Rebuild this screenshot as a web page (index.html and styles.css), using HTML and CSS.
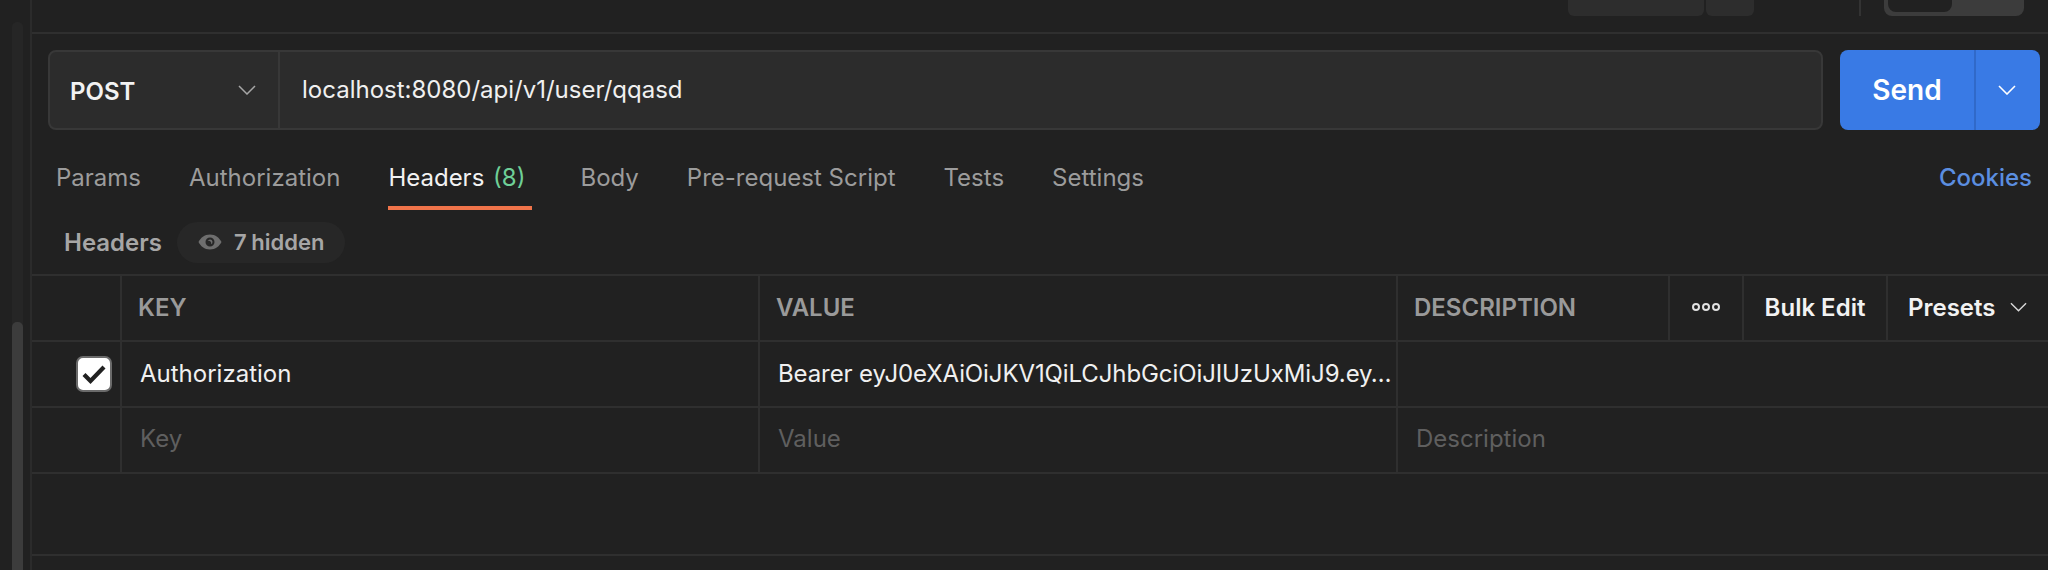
FILE: index.html
```html
<!DOCTYPE html>
<html lang="en">
<head>
<meta charset="utf-8">
<title>Request</title>
<link rel="stylesheet" href="styles.css">
</head>
<body>
<div class="app">
  <aside class="rail"><div class="track"><div class="thumb"></div></div></aside>
  <main class="main">
    <div class="topbar">
      <div class="seg seg-a"></div>
      <div class="seg seg-b"></div>
      <div class="vline"></div>
      <div class="toggle"><div class="toggle-on"></div></div>
    </div>
    <div class="request">
      <div class="urlbar">
        <div class="method"><span>POST</span>
          <svg class="chev" width="18" height="10" viewBox="0 0 18 10"><path d="M1 1 9 9 17 1" fill="none" stroke="#a6a6a6" stroke-width="1.500"/></svg>
        </div>
        <div class="url">localhost:8080/api/v1/user/qqasd</div>
      </div>
      <div class="send">
        <div class="send-label">Send</div>
        <div class="send-more"><svg width="18" height="10" viewBox="0 0 18 10"><path d="M1 1 9 9 17 1" fill="none" stroke="#fff" stroke-width="1.600"/></svg></div>
      </div>
    </div>
    <nav class="tabs">
      <a class="tab">Params</a>
      <a class="tab">Authorization</a>
      <a class="tab active">Headers <span class="count">(8)</span></a>
      <a class="tab">Body</a>
      <a class="tab">Pre-request Script</a>
      <a class="tab">Tests</a>
      <a class="tab">Settings</a>
      <a class="cookies">Cookies</a>
    </nav>
    <div class="subhead">
      <span class="subtitle">Headers</span>
      <span class="pill">
        <svg width="24" height="16" viewBox="0 0 24 16"><path fill-rule="evenodd" fill="#6e6e6e" d="M12 0.500C6.500 0.500 2.500 4 0.500 8c2 4 6 7.500 11.500 7.500S21.500 12 23.500 8C21.500 4 17.500 0.500 12 0.500ZM12 3.500a4.500 4.500 0 1 1 0 9 4.500 4.500 0 0 1 0-9ZM12 5.500a2.500 2.500 0 0 0-2.300 1.500 2.500 2.500 0 0 1 3.300 3.300A2.500 2.500 0 0 0 12 5.500Z"/></svg>
        <span class="pill-text">7 hidden</span>
      </span>
    </div>
    <div class="table">
      <div class="row head">
        <div class="cell c-check"></div>
        <div class="cell c-key">KEY</div>
        <div class="cell c-val">VALUE</div>
        <div class="cell c-desc">DESCRIPTION</div>
        <div class="cell c-more"><i></i><i></i><i></i></div>
        <div class="cell c-bulk">Bulk Edit</div>
        <div class="cell c-presets">Presets
          <svg width="17" height="10" viewBox="0 0 18 10"><path d="M1 1 9 9 17 1" fill="none" stroke="#d8d8d8" stroke-width="1.500"/></svg>
        </div>
      </div>
      <div class="row filled">
        <div class="cell c-check"><span class="checkbox"><svg width="26" height="20" viewBox="0 0 26 20"><path d="M3 10.500 9.500 17 23 3" fill="none" stroke="#212121" stroke-width="4.200"/></svg></span></div>
        <div class="cell c-key body">Authorization</div>
        <div class="cell c-val body">Bearer eyJ0eXAiOiJKV1QiLCJhbGciOiJIUzUxMiJ9.ey…</div>
        <div class="cell c-rest"></div>
      </div>
      <div class="row empty">
        <div class="cell c-check"></div>
        <div class="cell c-key ph">Key</div>
        <div class="cell c-val ph">Value</div>
        <div class="cell c-rest ph">Description</div>
      </div>
    </div>
    <div class="blank"></div>
  </main>
</div>
</body>
</html>
```
FILE: styles.css
```css
* { box-sizing: border-box; }
html, body { margin: 0; height: 570px; overflow: hidden; background: #212121; }
body { font-family: Inter, "Liberation Sans", sans-serif; color: #fff; }
.app { display: flex; height: 570px; }

.rail { width: 32px; flex: none; padding: 22px 7px 0 12px; border-right: 2px solid #2b2b2b; }
.track { height: 100%; background: #262626; border-radius: 5px 5px 0 0; padding-top: 300px; }
.thumb { height: 100%; background: #3c3c3c; border-radius: 5px 5px 0 0; }

.main { flex: 1; min-width: 0; display: flex; flex-direction: column; }

.topbar { height: 34px; flex: none; border-bottom: 2px solid #2f2f2f; display: flex; align-items: flex-start; padding-right: 24px; justify-content: flex-end; }
.seg { height: 16px; background: #2d2d2d; }
.seg-a { width: 136px; border-radius: 0 0 6px 6px; }
.seg-b { width: 48px; margin-left: 2px; border-radius: 0 0 6px 6px; }
.vline { width: 2px; height: 16px; background: #333; margin: 0 23px 0 105px; }
.toggle { width: 140px; height: 16px; background: #3c3c3c; border-radius: 0 0 8px 8px; padding-left: 4px; }
.toggle-on { width: 64px; height: 12px; background: #212121; border-radius: 0 0 8px 8px; }

.request { display: flex; gap: 17px; padding: 16px 8px 0 16px; flex: none; }
.urlbar { flex: 1; height: 80px; display: flex; background: #2c2c2c; border: 2px solid #383838; border-radius: 8px; }
.method { width: 230px; flex: none; border-right: 2px solid #383838; display: flex; align-items: center; justify-content: space-between; padding: 2px 22px 0 20px; font-size: 24px; font-weight: 600; color: #f2f2f2; }
.chev { margin-top: -2px; }
.url { padding-left: 22px; font-size: 24px; line-height: 76px; color: #f0f0f0; height: 76px; }
.send { width: 200px; height: 80px; flex: none; display: flex; background: #397ae5; border-radius: 8px; }
.send-label { width: 136px; border-right: 2px solid #3069c9; text-align: center; font-size: 28px; font-weight: 600; line-height: 80px; }
.send-more { flex: 1; display: flex; align-items: center; justify-content: center; padding-right: 2px; }

.tabs { display: flex; height: 80px; flex: none; align-items: flex-start; padding: 0 16px 0 24px; font-size: 24px; color: #9c9c9c; gap: 48px; }
.tab { display: block; height: 80px; padding-top: 31px; line-height: 34px; white-space: nowrap; }
.tab.active { color: #f2f2f2; border-bottom: 4px solid #f0744a; padding-right: 7px; word-spacing: 2px; }
.count { color: #6fcf97; }
.cookies { margin-left: auto; padding-top: 31px; line-height: 34px; font-weight: 500; color: #5b8ee0; }

.subhead { height: 64px; flex: none; display: flex; align-items: center; padding-left: 32px; gap: 15px; }
.subtitle { font-size: 24px; font-weight: 600; color: #a6a6a6; }
.pill { display: inline-flex; align-items: center; gap: 12px; height: 41px; padding: 0 21px; background: #272727; border-radius: 21px; font-size: 22px; font-weight: 600; color: #a6a6a6; }
.pill-text { word-spacing: -1px; }

.table { border-top: 2px solid #2f2f2f; flex: none; }
.row { display: flex; height: 66px; border-bottom: 2px solid #2f2f2f; }
.cell { display: flex; align-items: center; flex: none; border-right: 2px solid #2f2f2f; white-space: nowrap; font-size: 24px; min-width: 0; }
.head .cell, .filled .c-key, .filled .c-val { padding-bottom: 2px; }
.empty .cell { padding-bottom: 4px; }
.c-check { width: 90px; justify-content: flex-end; padding-right: 8px; }
.c-key { width: 638px; padding-left: 16px; }
.c-val { width: 638px; padding-left: 16px; }
.c-desc { width: 272px; padding-left: 16px; }
.c-more { width: 74px; justify-content: center; gap: 2px; }
.c-more i { width: 8px; height: 8px; border: 2px solid #e0e0e0; border-radius: 50%; }
.c-bulk { width: 144px; justify-content: center; color: #f2f2f2; font-weight: 600; }
.c-presets { flex: 1; border-right: 0; padding-left: 20px; gap: 14px; color: #f2f2f2; font-weight: 600; }
.c-rest { flex: 1; border-right: 0; padding-left: 18px; }
.head .c-key, .head .c-val, .head .c-desc { color: #9a9a9a; font-weight: 600; }
.c-key.body, .c-key.ph { padding-left: 18px; color: #f0f0f0; }
.c-val.body { padding-left: 18px; color: #f0f0f0; letter-spacing: -0.1px; }
.ph, .c-key.ph { color: #5f5f5f; }
.c-val.ph { padding-left: 18px; }
.checkbox { width: 36px; height: 36px; background: #fff; border: 2px solid #6b6b6b; border-radius: 7px; display: flex; align-items: center; justify-content: center; }

.blank { height: 82px; flex: none; border-bottom: 2px solid #2f2f2f; }
```
